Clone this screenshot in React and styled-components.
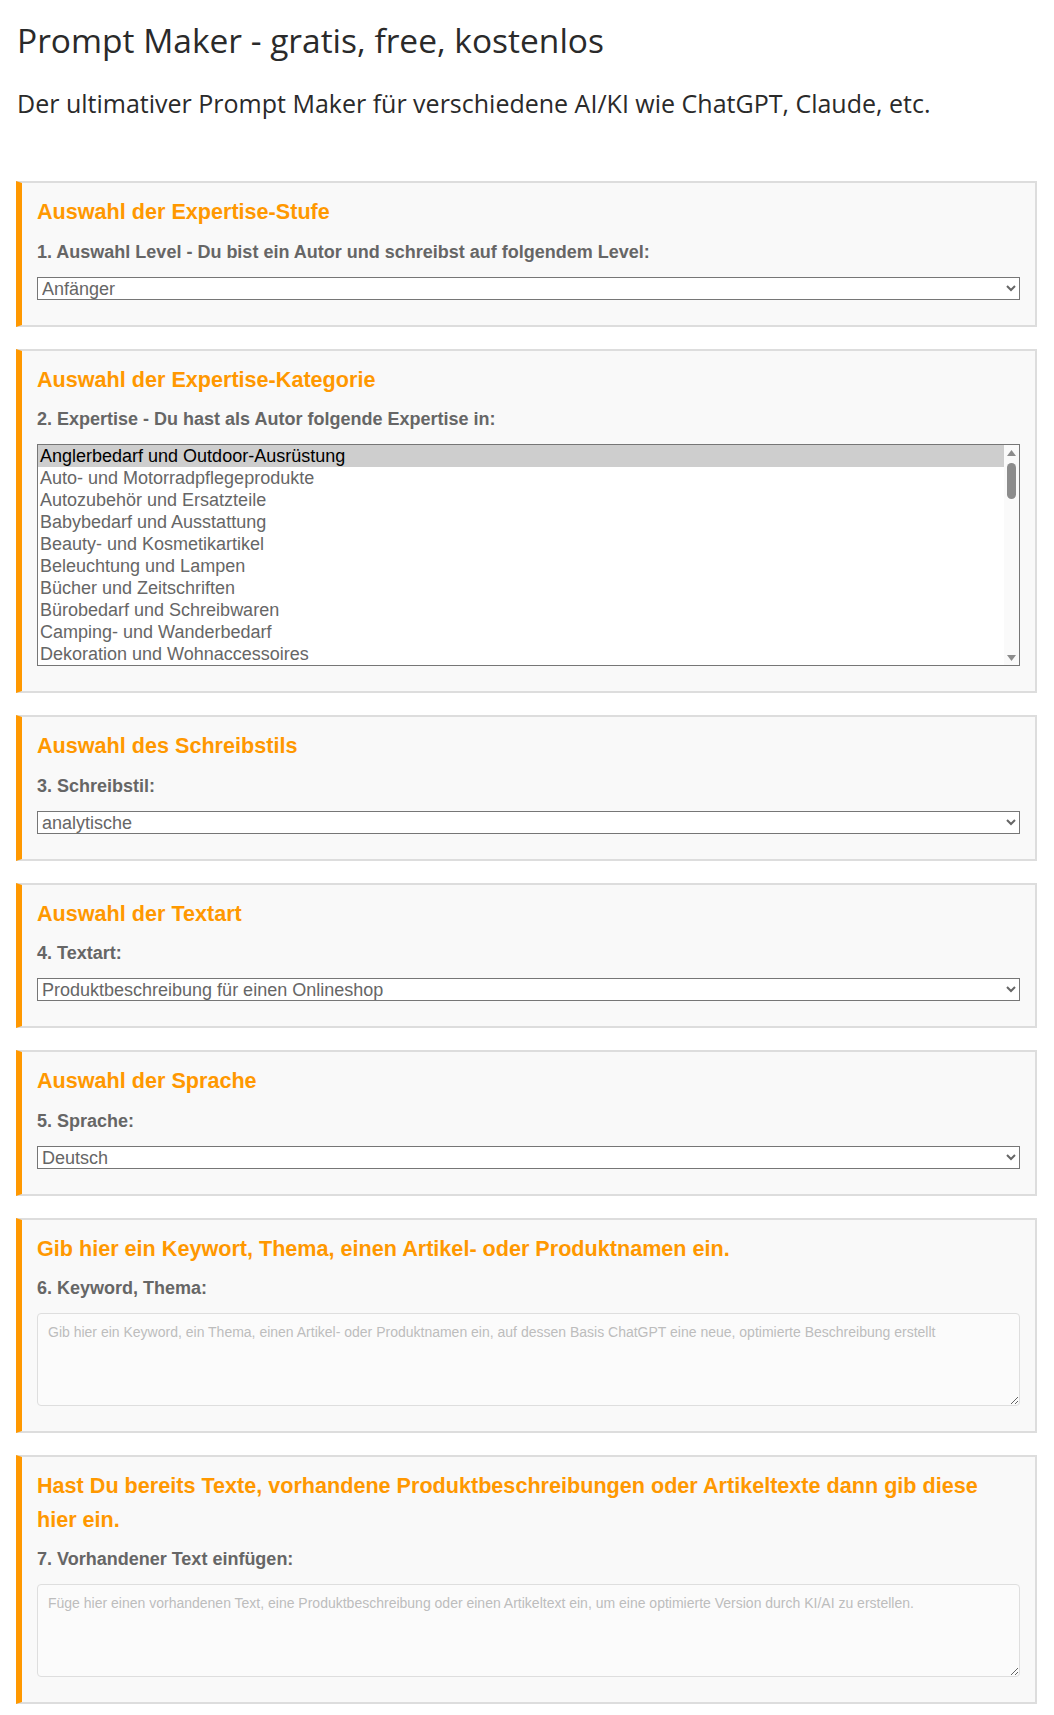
import React from 'react';
import styled, { createGlobalStyle } from 'styled-components';

const GlobalStyle = createGlobalStyle`
  body {
    margin: 0;
    background: #fff;
    font-family: "Liberation Sans", Arial, sans-serif;
  }
`;

const Page = styled.div`
  width: 1021px;
  margin-left: 16px;
  padding-top: 20px;
  padding-bottom: 12px;
`;

const Title = styled.h1`
  margin: 0 0 28px 1px;
  font-family: "Open Sans", Lato, sans-serif;
  font-size: 33.5px;
  font-weight: 400;
  line-height: 1.2;
  color: #2a2a2a;
`;

const Subtitle = styled.h2`
  margin: 0 0 63px 1px;
  font-family: "Open Sans", Lato, sans-serif;
  font-size: 25px;
  font-weight: 400;
  line-height: 1.2;
  color: #2a2a2a;
`;

const Sections = styled.div`
  display: flex;
  flex-direction: column;
  gap: 22px;
`;

const Section = styled.section`
  display: flex;
  flex-direction: column;
  background: #f9f9f9;
  border: 2px solid #dddddd;
  border-left: 6px solid #ff9800;
  padding: 12px 15px 25px 15px;
`;

const SectionTitle = styled.h3`
  margin: 0 0 10px 0;
  font-size: 21.6px;
  font-weight: 700;
  line-height: 33.5px;
  color: #ff9800;
`;

const FieldLabel = styled.label`
  display: block;
  margin-bottom: 11px;
  font-size: 18px;
  font-weight: 700;
  line-height: 27px;
  color: #666;
`;

const Dropdown = styled.select`
  width: 100%;
  height: 23px;
  font-family: "Liberation Sans", Arial, sans-serif;
  font-size: 18px;
  color: #666;
  background: #fff;
  border: 1px solid #767676;
  border-radius: 0;
`;

const ListFrame = styled.div`
  display: flex;
  height: 222px;
  box-sizing: border-box;
  border: 1px solid #767676;
  background: #fff;
`;

const OptionList = styled.ul`
  flex: 1;
  margin: 0;
  padding: 0;
  list-style: none;
  overflow: hidden;
`;

const OptionRow = styled.li`
  height: 22px;
  padding: 0 2px;
  font-size: 18px;
  line-height: 22px;
  white-space: nowrap;
  color: ${(p) => (p.$selected ? '#000' : '#666')};
  background: ${(p) => (p.$selected ? '#cecece' : 'transparent')};
`;

const ScrollTrack = styled.div`
  display: flex;
  flex-direction: column;
  align-items: center;
  width: 15px;
  background: #fafafa;
`;

const ScrollArrow = styled.div`
  display: flex;
  align-items: center;
  justify-content: center;
  width: 15px;
  height: 15px;
  flex-shrink: 0;
`;

const ScrollThumb = styled.div`
  width: 9px;
  height: 36px;
  margin-top: 3px;
  border-radius: 5px;
  background: #8c8c8c;
`;

const ScrollSpacer = styled.div`
  flex: 1;
`;

const TextArea = styled.textarea`
  width: 100%;
  height: 93px;
  box-sizing: border-box;
  padding: 10px;
  font-family: "Liberation Sans", Arial, sans-serif;
  font-size: 14px;
  color: #444;
  background: #fbfbfb;
  border: 1px solid #dedede;
  border-radius: 4px;

  &::placeholder {
    color: #bdbdbd;
  }
`;

const categories = [
  'Anglerbedarf und Outdoor-Ausrüstung',
  'Auto- und Motorradpflegeprodukte',
  'Autozubehör und Ersatzteile',
  'Babybedarf und Ausstattung',
  'Beauty- und Kosmetikartikel',
  'Beleuchtung und Lampen',
  'Bücher und Zeitschriften',
  'Bürobedarf und Schreibwaren',
  'Camping- und Wanderbedarf',
  'Dekoration und Wohnaccessoires',
];

function Triangle({ down }) {
  return (
    <svg width="9" height="6" viewBox="0 0 9 6">
      <path d={down ? 'M0 0 L9 0 L4.5 6 Z' : 'M0 6 L9 6 L4.5 0 Z'} fill="#8c8c8c" />
    </svg>
  );
}

function CategoryList({ items, selected }) {
  return (
    <ListFrame id="expertise">
      <OptionList role="listbox">
        {items.map((c) => (
          <OptionRow key={c} role="option" aria-selected={c === selected} $selected={c === selected}>
            {c}
          </OptionRow>
        ))}
      </OptionList>
      <ScrollTrack>
        <ScrollArrow>
          <Triangle />
        </ScrollArrow>
        <ScrollThumb />
        <ScrollSpacer />
        <ScrollArrow>
          <Triangle down />
        </ScrollArrow>
      </ScrollTrack>
    </ListFrame>
  );
}

export default function App() {
  return (
    <>
      <GlobalStyle />
      <Page>
        <Title>Prompt Maker - gratis, free, kostenlos</Title>
        <Subtitle>Der ultimativer Prompt Maker für verschiedene AI/KI wie ChatGPT, Claude, etc.</Subtitle>
        <Sections>
          <Section>
            <SectionTitle>Auswahl der Expertise-Stufe</SectionTitle>
            <FieldLabel htmlFor="level">1. Auswahl Level - Du bist ein Autor und schreibst auf folgendem Level:</FieldLabel>
            <Dropdown id="level" defaultValue="Anfänger">
              <option>Anfänger</option>
              <option>Fortgeschritten</option>
              <option>Experte</option>
            </Dropdown>
          </Section>

          <Section>
            <SectionTitle>Auswahl der Expertise-Kategorie</SectionTitle>
            <FieldLabel htmlFor="expertise">2. Expertise - Du hast als Autor folgende Expertise in:</FieldLabel>
            <CategoryList items={categories} selected={categories[0]} />
          </Section>

          <Section>
            <SectionTitle>Auswahl des Schreibstils</SectionTitle>
            <FieldLabel htmlFor="stil">3. Schreibstil:</FieldLabel>
            <Dropdown id="stil" defaultValue="analytische">
              <option>analytische</option>
              <option>kreative</option>
              <option>sachliche</option>
            </Dropdown>
          </Section>

          <Section>
            <SectionTitle>Auswahl der Textart</SectionTitle>
            <FieldLabel htmlFor="textart">4. Textart:</FieldLabel>
            <Dropdown id="textart" defaultValue="Produktbeschreibung für einen Onlineshop">
              <option>Produktbeschreibung für einen Onlineshop</option>
              <option>Blogartikel</option>
              <option>Newsletter</option>
            </Dropdown>
          </Section>

          <Section>
            <SectionTitle>Auswahl der Sprache</SectionTitle>
            <FieldLabel htmlFor="sprache">5. Sprache:</FieldLabel>
            <Dropdown id="sprache" defaultValue="Deutsch">
              <option>Deutsch</option>
              <option>Englisch</option>
              <option>Französisch</option>
            </Dropdown>
          </Section>

          <Section>
            <SectionTitle>Gib hier ein Keywort, Thema, einen Artikel- oder Produktnamen ein.</SectionTitle>
            <FieldLabel htmlFor="keyword">6. Keyword, Thema:</FieldLabel>
            <TextArea
              id="keyword"
              placeholder="Gib hier ein Keyword, ein Thema, einen Artikel- oder Produktnamen ein, auf dessen Basis ChatGPT eine neue, optimierte Beschreibung erstellt"
            />
          </Section>

          <Section>
            <SectionTitle>
              Hast Du bereits Texte, vorhandene Produktbeschreibungen oder Artikeltexte dann gib diese hier ein.
            </SectionTitle>
            <FieldLabel htmlFor="vorhanden">7. Vorhandener Text einfügen:</FieldLabel>
            <TextArea
              id="vorhanden"
              placeholder="Füge hier einen vorhandenen Text, eine Produktbeschreibung oder einen Artikeltext ein, um eine optimierte Version durch KI/AI zu erstellen."
            />
          </Section>
        </Sections>
      </Page>
    </>
  );
}
